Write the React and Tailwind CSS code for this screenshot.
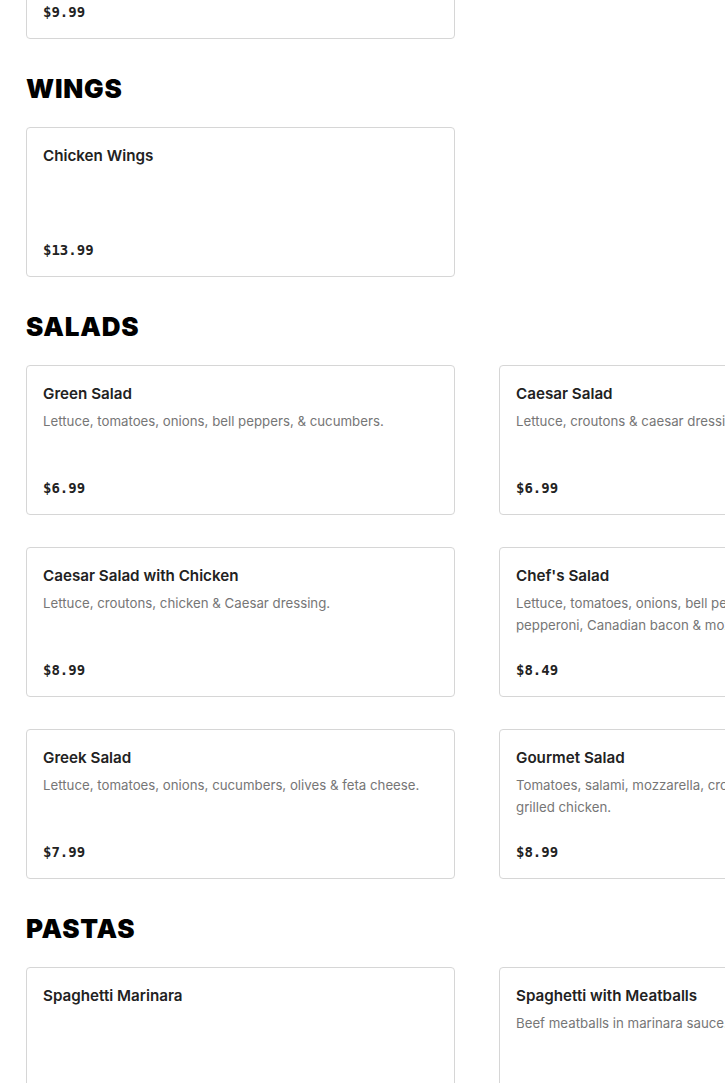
import React from "react";

const sections = [
  {
    title: null,
    items: [{ name: "", desc: "", price: "$9.99" }],
  },
  {
    title: "WINGS",
    items: [{ name: "Chicken Wings", desc: "", price: "$13.99" }],
  },
  {
    title: "SALADS",
    items: [
      { name: "Green Salad", desc: "Lettuce, tomatoes, onions, bell peppers, & cucumbers.", price: "$6.99" },
      { name: "Caesar Salad", desc: "Lettuce, croutons & caesar dressing.", price: "$6.99" },
      { name: "Caesar Salad with Chicken", desc: "Lettuce, croutons, chicken & Caesar dressing.", price: "$8.99" },
      { name: "Chef's Salad", desc: "Lettuce, tomatoes, onions, bell peppers, cucumbers, ham, pepperoni, Canadian bacon & mozzarella cheese.", price: "$8.49" },
      { name: "Greek Salad", desc: "Lettuce, tomatoes, onions, cucumbers, olives & feta cheese.", price: "$7.99" },
      { name: "Gourmet Salad", desc: "Tomatoes, salami, mozzarella, croutons, onions, cucumbers & grilled chicken.", price: "$8.99" },
    ],
  },
  {
    title: "PASTAS",
    items: [
      { name: "Spaghetti Marinara", desc: "", price: "$10.99" },
      { name: "Spaghetti with Meatballs", desc: "Beef meatballs in marinara sauce.", price: "$12.99" },
    ],
  },
];

function Card({ item }) {
  return (
    <div className="flex h-[150px] flex-col rounded-[4px] border border-[#d6d6d6] bg-white p-4">
      {item.name ? (
        <div className="text-[15.2px] leading-6 font-semibold text-[#222]" style={{ fontFamily: "Inter, 'Noto Sans', sans-serif" }}>
          {item.name}
        </div>
      ) : null}
      {item.desc ? (
        <div className="mt-1 text-[13.25px] leading-[22px] text-[#767676]" style={{ fontFamily: "Inter, 'Noto Sans', sans-serif" }}>
          {item.desc}
        </div>
      ) : null}
      <div className="mt-auto text-[14px] leading-5 font-bold text-[#222]" style={{ fontFamily: "'DejaVu Sans Mono', 'Liberation Mono', monospace" }}>
        {item.price}
      </div>
    </div>
  );
}

export default function App() {
  return (
    <div className="w-full overflow-hidden bg-white">
      <div className="mt-[-111px] w-[954px] px-[26px] pb-10">
        {sections.map((s, i) => (
          <section key={i}>
            {s.title ? (
              <h2
                className="mt-[34px] mb-[22px] text-[26px] leading-8 font-black tracking-[0.03em] text-black"
                style={{ fontFamily: "Inter, 'Noto Sans', sans-serif" }}
              >
                {s.title}
              </h2>
            ) : null}
            <div className="grid grid-cols-[429px_429px] gap-x-[44px] gap-y-[32px]">
              {s.items.map((it, j) => (
                <Card key={j} item={it} />
              ))}
            </div>
          </section>
        ))}
      </div>
    </div>
  );
}
